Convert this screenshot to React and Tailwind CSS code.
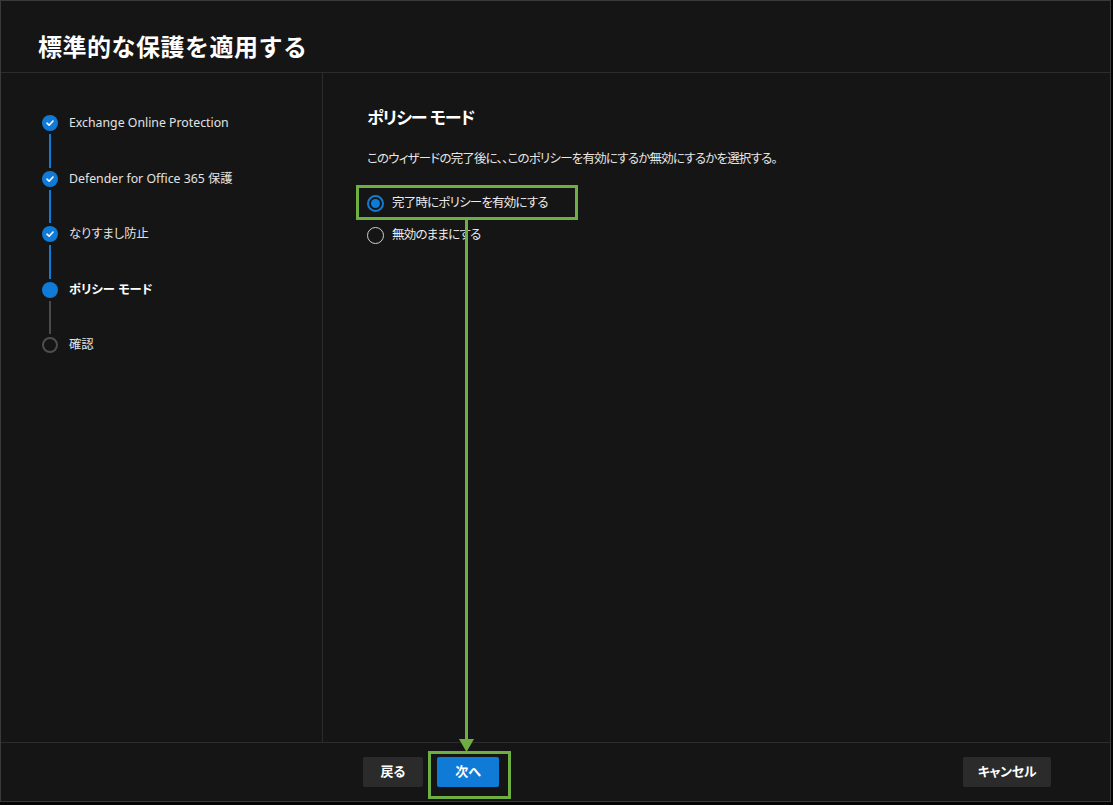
import React from "react";

const font = { fontFamily: '"Noto Sans", "Noto Sans CJK JP", sans-serif' };

function Check() {
  return (
    <div className="w-4 h-4 rounded-full bg-[#0f7bd6] flex items-center justify-center shrink-0">
      <svg width="10" height="10" viewBox="0 0 10 10">
        <path d="M2 5.2 L4.1 7.2 L8 3" stroke="white" strokeWidth="1.6" fill="none" strokeLinecap="round" strokeLinejoin="round" />
      </svg>
    </div>
  );
}

function Step({ kind, label, line }) {
  return (
    <div className="flex flex-col">
      <div className="flex items-center h-4">
        {kind === "done" && <Check />}
        {kind === "current" && <div className="w-4 h-4 rounded-full bg-[#0f7bd6] shrink-0" />}
        {kind === "todo" && <div className="w-4 h-4 rounded-full border-2 border-[#4d4d4d] shrink-0" />}
        <span className={`ml-[11px] text-[12.3px] leading-4 [font-feature-settings:'palt'] ${kind === "current" ? "font-bold text-white" : "text-[#e3e3e3]"}`}>{label}</span>
      </div>
      {line && (
        <div className="h-[39.5px] w-4 flex justify-center py-[3px]">
          <div className={`w-[2px] h-full ${line === "blue" ? "bg-[#0f7bd6]" : "bg-[#4a4a4a]"}`} />
        </div>
      )}
    </div>
  );
}

export default function App() {
  return (
    <div className="w-[1113px] h-[805px] bg-[#050505] relative" style={font}>
      <div className="w-[1111px] h-[802px] border border-[#3a3a3a] bg-[#151515] flex flex-col">
        <div className="h-[72px] flex items-center pl-[37px] pt-[20px] border-b border-[#2c2c2c]">
          <h1 className="text-[24px] font-semibold text-white tracking-[0.5px]">標準的な保護を適用する</h1>
        </div>
        <div className="flex flex-1">
          <div className="w-[322px] border-r border-[#2c2c2c] pl-[41px] pt-[42px]">
            <Step kind="done" label="Exchange Online Protection" line="blue" />
            <Step kind="done" label="Defender for Office 365 保護" line="blue" />
            <Step kind="done" label="なりすまし防止" line="blue" />
            <Step kind="current" label="ポリシー モード" line="gray" />
            <Step kind="todo" label="確認" />
          </div>
          <div className="flex-1 pl-[44px] pt-[32px] [font-feature-settings:'palt']">
            <h2 className="text-[17px] font-bold text-white leading-[26px] tracking-[-1px]">ポリシー モード</h2>
            <p className="text-[12.5px] text-[#e6e6e6] mt-[19px] leading-[18px] tracking-[-0.8px]">このウィザードの完了後に、、このポリシーを有効にするか無効にするかを選択する。</p>
            <div className="mt-[27px] flex flex-col gap-[16px]">
              <div className="flex items-center h-4">
                <div className="w-[17px] h-[17px] rounded-full border-2 border-[#0f7bd6] flex items-center justify-center">
                  <div className="w-[9px] h-[9px] rounded-full bg-[#0f7bd6]" />
                </div>
                <span className="ml-[8px] text-[12.5px] text-[#ececec] tracking-[-0.8px]">完了時にポリシーを有効にする</span>
              </div>
              <div className="flex items-center h-4">
                <div className="w-[17px] h-[17px] rounded-full border border-[#d0d0d0]" />
                <span className="ml-[8px] text-[12.5px] text-[#ececec] tracking-[-0.8px]">無効のままにする</span>
              </div>
            </div>
          </div>
        </div>
        <div className="h-[59px] border-t border-[#2c2c2c] flex items-center pl-[362px] pr-[59px] pb-[1px] [font-feature-settings:'palt']">
          <button className="w-[60px] h-[30px] rounded-[2px] bg-[#2b2b2b] text-white text-[13px] font-semibold">戻る</button>
          <button className="ml-[14px] w-[62px] h-[30px] rounded-[2px] bg-[#0f7bd6] text-white text-[13px] font-semibold">次へ</button>
          <div className="flex-1" />
          <button className="w-[88px] h-[30px] rounded-[2px] bg-[#2b2b2b] text-white text-[13px] font-semibold tracking-[-0.3px]">キャンセル</button>
        </div>
      </div>

      {/* green annotations */}
      <div className="absolute left-[356px] top-[185px] w-[222px] h-[35px] border-[3px] border-[#6fae43]" />
      <div className="absolute left-[465px] top-[220px] w-[3px] h-[522px] bg-[#6fae43]" />
      <svg className="absolute left-[459px] top-[739px]" width="15" height="13" viewBox="0 0 15 13">
        <polygon points="0,0 15,0 7.5,13" fill="#6fae43" />
      </svg>
      <div className="absolute left-[428px] top-[751px] w-[83px] h-[48px] border-[3px] border-[#6fae43]" />
    </div>
  );
}
